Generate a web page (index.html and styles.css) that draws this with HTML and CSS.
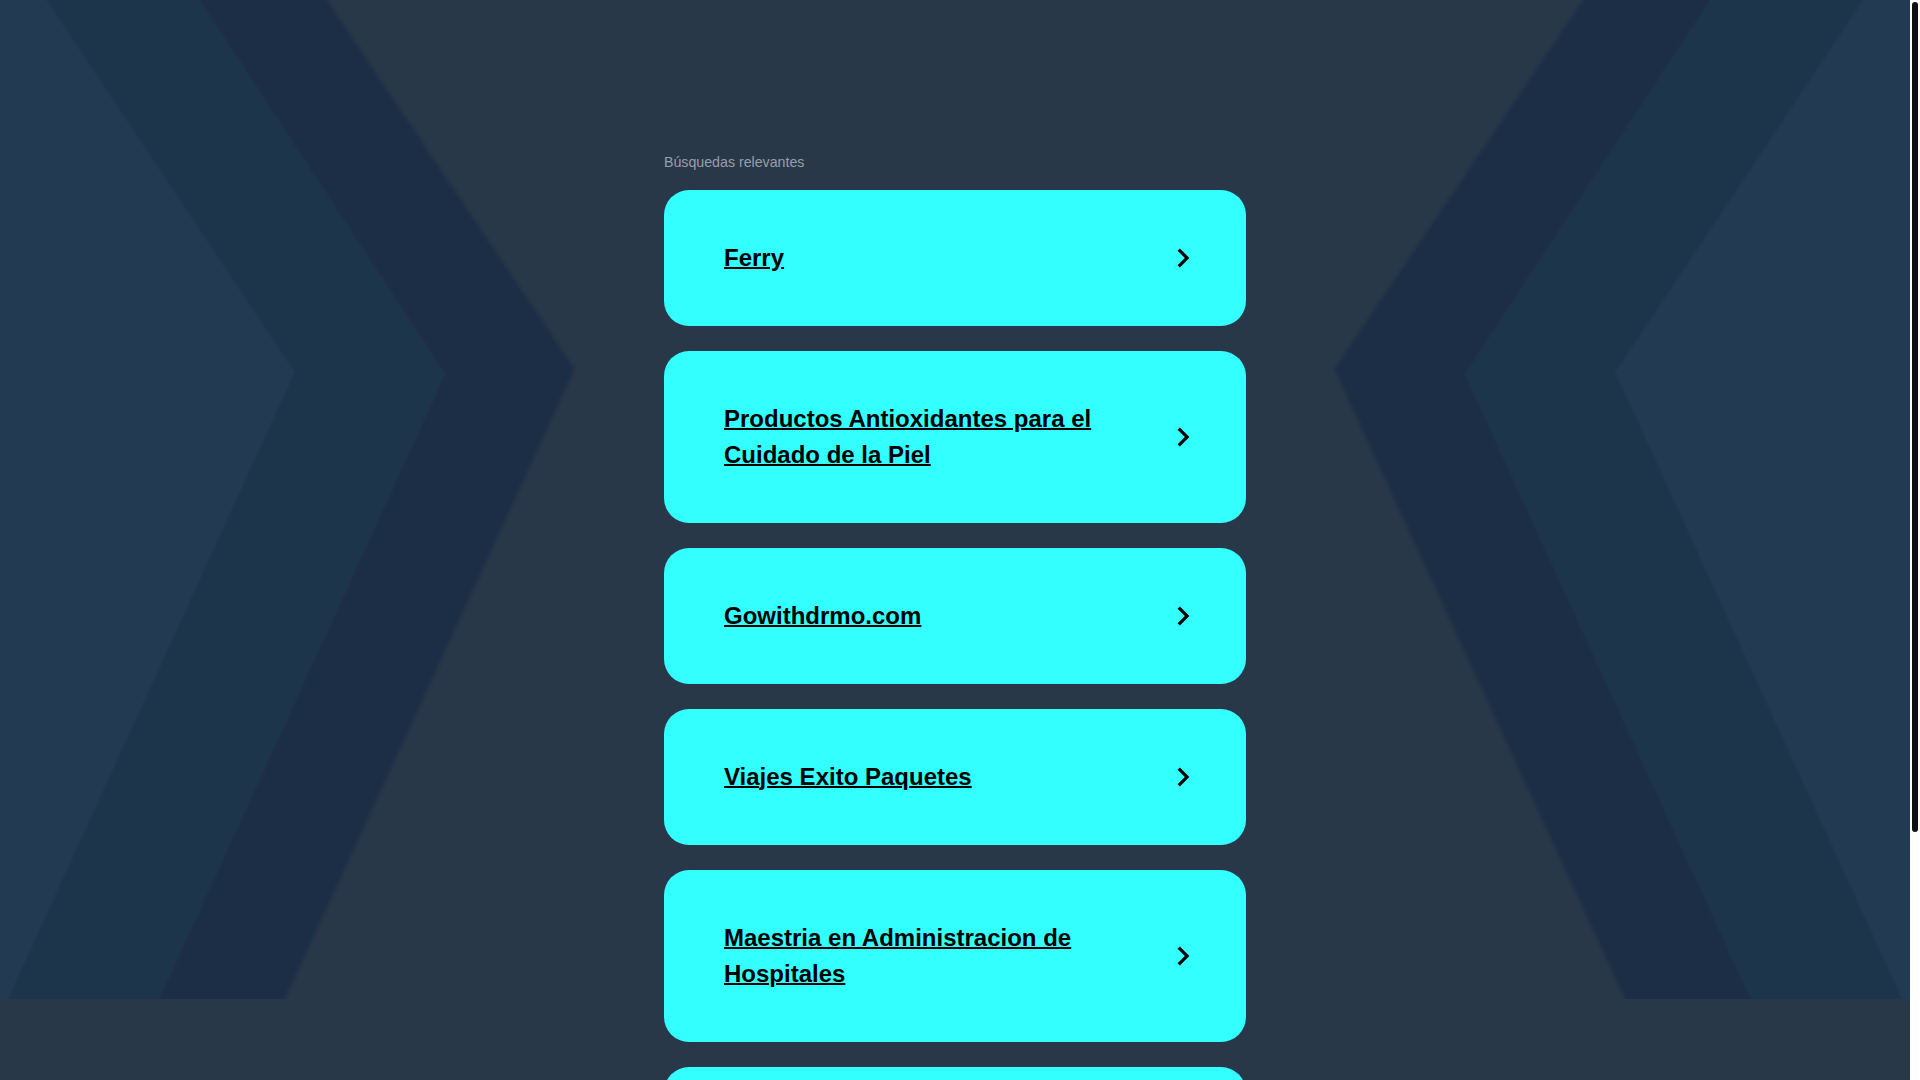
FILE: index.html
```html
<!DOCTYPE html>
<html lang="es">
<head>
<meta charset="utf-8">
<title>Búsquedas relevantes</title>
<link rel="stylesheet" href="styles.css">
</head>
<body>
<div class="page">
  <svg class="backdrop" viewBox="0 0 1910 999" preserveAspectRatio="none" aria-hidden="true">
    <defs>
      <filter id="soft" x="-5%" y="-5%" width="110%" height="110%">
        <feGaussianBlur stdDeviation="1.5"/>
      </filter>
    </defs>
    <g filter="url(#soft)">
      <polygon class="band-a" points="-30,-30 27,-30 295,372 -6,1030 -30,1030"/>
      <polygon class="band-b" points="27,-30 180,-30 445,374 145,1030 -6,1030 295,372"/>
      <polygon class="band-c" points="180,-30 307,-30 575,369 271,1030 145,1030 445,374"/>
      <polygon class="band-a" points="1940,-30 1883,-30 1615,372 1916,1030 1940,1030"/>
      <polygon class="band-b" points="1883,-30 1730,-30 1465,374 1765,1030 1916,1030 1615,372"/>
      <polygon class="band-c" points="1730,-30 1603,-30 1334,369 1639,1030 1765,1030 1465,374"/>
    </g>
  </svg>
  <main class="content">
    <div class="heading">Búsquedas relevantes</div>
    <ul class="results">
      <li><a class="card" href="#"><span class="label">Ferry</span><svg class="chev" viewBox="0 0 24 24"><path d="M8.59 16.59L13.17 12 8.59 7.41 10 6l6 6-6 6z"/></svg></a></li>
      <li><a class="card" href="#"><span class="label">Productos Antioxidantes para el Cuidado de la Piel</span><svg class="chev" viewBox="0 0 24 24"><path d="M8.59 16.59L13.17 12 8.59 7.41 10 6l6 6-6 6z"/></svg></a></li>
      <li><a class="card" href="#"><span class="label">Gowithdrmo.com</span><svg class="chev" viewBox="0 0 24 24"><path d="M8.59 16.59L13.17 12 8.59 7.41 10 6l6 6-6 6z"/></svg></a></li>
      <li><a class="card" href="#"><span class="label">Viajes Exito Paquetes</span><svg class="chev" viewBox="0 0 24 24"><path d="M8.59 16.59L13.17 12 8.59 7.41 10 6l6 6-6 6z"/></svg></a></li>
      <li><a class="card" href="#"><span class="label">Maestria en Administracion de Hospitales</span><svg class="chev" viewBox="0 0 24 24"><path d="M8.59 16.59L13.17 12 8.59 7.41 10 6l6 6-6 6z"/></svg></a></li>
      <li><a class="card" href="#"><span class="label">Paquetes Turisticos</span><svg class="chev" viewBox="0 0 24 24"><path d="M8.59 16.59L13.17 12 8.59 7.41 10 6l6 6-6 6z"/></svg></a></li>
    </ul>
  </main>
</div>
<div class="scrollbar" aria-hidden="true"><div class="thumb"></div></div>
</body>
</html>
```

FILE: styles.css
```css
html {
  background: #293849;
  scrollbar-width: none;
}

::-webkit-scrollbar {
  display: none;
}

body {
  margin: 0;
  background: #293849;
  font-family: "Liberation Sans", Arial, sans-serif;
}

.page {
  display: grid;
  width: calc(100% - 10px);
}

.backdrop {
  grid-area: 1 / 1;
  display: block;
  width: 100%;
  height: 999px;
  overflow: hidden;
}

.band-a {
  fill: #213a52;
}

.band-b {
  fill: #1e344b;
}

.band-c {
  fill: #1b2f45;
}

.content {
  grid-area: 1 / 1;
  width: 582px;
  margin: 0 auto;
  padding: 154px 0 200px;
}

.heading {
  font-size: 14.2px;
  line-height: 16px;
  color: #9a9fa6;
  margin-bottom: 20px;
}

.results {
  list-style: none;
  margin: 0;
  padding: 0;
  display: flex;
  flex-direction: column;
  gap: 25px;
}

.card {
  display: flex;
  align-items: center;
  background: #33ffff;
  border-radius: 25px;
  padding: 50px 44px 50px 60px;
  color: #000000;
  text-decoration: none;
}

.label {
  flex: 1 1 auto;
  font-size: 24px;
  line-height: 36px;
  font-weight: 700;
  text-decoration: underline;
  text-decoration-thickness: 2px;
}

.chev {
  flex: 0 0 38px;
  width: 38px;
  height: 38px;
  margin: -1px 0;
  fill: #000000;
}

.scrollbar {
  position: fixed;
  top: 0;
  right: 0;
  bottom: 0;
  width: 10px;
  box-sizing: border-box;
  padding: 2px;
  background: #ffffff;
}

.thumb {
  height: 830px;
  background: #111111;
  border-radius: 3px;
}
```
